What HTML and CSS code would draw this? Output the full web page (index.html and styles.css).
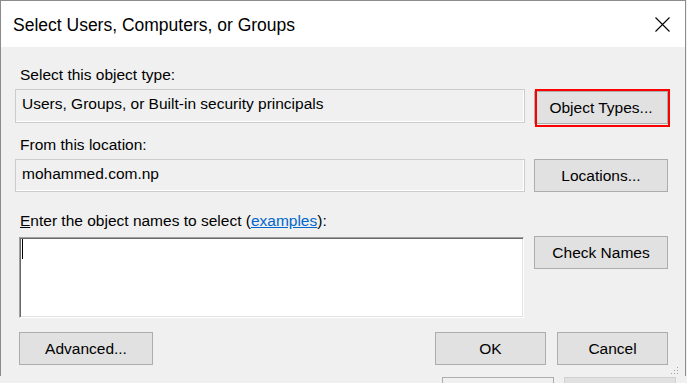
FILE: index.html
```html
<!DOCTYPE html>
<html>
<head>
<meta charset="utf-8">
<link rel="stylesheet" href="styles.css">
</head>
<body>
<div class="window">
  <div class="titlebar">
    <div class="title">Select Users, Computers, or Groups</div>
    <svg class="close" width="15" height="15" viewBox="0 0 15 15"><path d="M0.5 0.5 L14.5 14.5 M14.5 0.5 L0.5 14.5" stroke="#000" stroke-width="1.1" fill="none"/></svg>
  </div>
  <div class="content">
    <div class="label l1">Select this object type:</div>
    <div class="field f1">Users, Groups, or Built-in security principals</div>
    <div class="btnwrap b1">
      <div class="btn">Object Types...</div>
      <div class="highlight"></div>
    </div>
    <div class="label l2">From this location:</div>
    <div class="field f2">mohammed.com.np</div>
    <div class="btn b2">Locations...</div>
    <div class="label l3"><span class="u">E</span>nter the object names to select (<span class="link">examples</span>):</div>
    <div class="names"><span class="caret"></span></div>
    <div class="btn b3">Check Names</div>
    <div class="footer">
      <div class="btn adv">Advanced...</div>
      <div class="actions">
        <div class="btn small">OK</div>
        <div class="btn small">Cancel</div>
      </div>
    </div>
    <div class="grip">
      <span></span><span></span><span></span><span></span><span></span><span></span>
    </div>
  </div>
</div>
<div class="behind">
  <div class="ghost g1"></div>
  <div class="ghost g2"></div>
</div>
</body>
</html>
```
FILE: styles.css
```css
html, body {
  margin: 0;
  padding: 0;
  background: #f0f0f0;
  font-family: "Liberation Sans", Arial, sans-serif;
  color: #000;
}
.window {
  box-sizing: border-box;
  width: 686px;
  height: 376px;
  border: 1px solid #8c8c8c;
  border-bottom: none;
  background: #f0f0f0;
  position: relative;
}
.titlebar {
  height: 46px;
  background: #fff;
  display: flex;
  justify-content: space-between;
  align-items: flex-start;
}
.title {
  font-size: 17.5px;
  line-height: 20px;
  padding: 14px 0 0 12px;
}
.close {
  margin: 16px 15px 0 0;
}
.content {
  position: relative;
  display: grid;
  grid-template-columns: 510px 134px;
  column-gap: 9px;
  padding: 19px 0 0 14px;
  font-size: 15.5px;
  line-height: 18px;
}
.label {
  grid-column: 1 / span 2;
  padding-left: 5px;
}
.l2 { margin-top: 12px; }
.l3 { margin-top: 20px; }
.field {
  box-sizing: border-box;
  height: 34px;
  margin-top: 5px;
  border: 1px solid #cccccc;
  box-shadow: inset -1px -1px 0 #ffffff;
  padding: 5px 6px 0;
  background: #f0f0f0;
}
.f2 { height: 33px; }
.btn {
  box-sizing: border-box;
  height: 33px;
  background: #e1e1e1;
  border: 1px solid #adadad;
  display: flex;
  align-items: center;
  justify-content: center;
}
.btnwrap {
  position: relative;
  margin-top: 7px;
  align-self: start;
}
.highlight {
  position: absolute;
  left: 1px;
  top: -2px;
  right: -2px;
  bottom: -3px;
  border: 2px solid #ff0000;
}
.b2 { margin-top: 5px; }
.names {
  box-sizing: border-box;
  height: 81px;
  width: 505px;
  margin: 7px 0 0 4px;
  background: #fff;
  border: 1px solid;
  border-color: #a0a0a0 #ffffff #ffffff #a0a0a0;
  box-shadow: inset 1px 1px 0 #696969, inset -1px -1px 0 #e3e3e3;
  padding: 1px 2px;
}
.caret {
  display: block;
  width: 1px;
  height: 20px;
  background: #000;
}
.b3 { margin-top: 6px; align-self: start; }
.footer {
  grid-column: 1 / span 2;
  display: flex;
  justify-content: space-between;
  margin-top: 14px;
}
.adv {
  width: 134px;
  margin-left: 4px;
}
.actions {
  display: flex;
  gap: 11px;
}
.small { width: 111px; }
.u { text-decoration: underline; }
.link {
  color: #0066cc;
  text-decoration: underline;
}
.grip {
  position: absolute;
  right: 7px;
  bottom: -9px;
  width: 7px;
  height: 7px;
}
.grip span {
  position: absolute;
  width: 1px;
  height: 1px;
  background: #a0a0a0;
}
.grip span:nth-child(1) { left: 6px; top: 0; }
.grip span:nth-child(2) { left: 3px; top: 3px; }
.grip span:nth-child(3) { left: 6px; top: 3px; }
.grip span:nth-child(4) { left: 0; top: 6px; }
.grip span:nth-child(5) { left: 3px; top: 6px; }
.grip span:nth-child(6) { left: 6px; top: 6px; }
.behind {
  display: flex;
  gap: 10px;
  padding: 1px 0 0 442px;
}
.ghost {
  box-sizing: border-box;
  width: 112px;
  height: 10px;
}
.g1 {
  border: 1px solid #adadad;
  background: #f0f0f0;
}
.g2 {
  background: #e1e1e1;
  border: 1px solid #d0d0d0;
}
```
